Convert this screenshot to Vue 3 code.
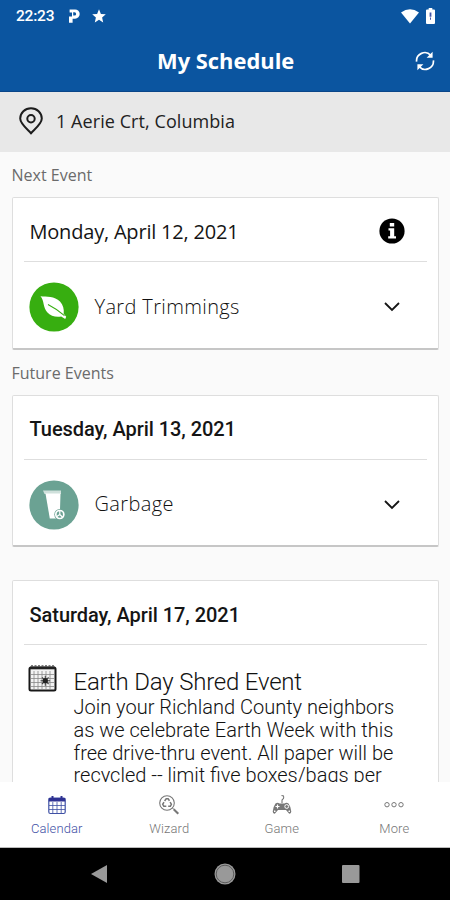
<template>
  <div class="phone">
    <header class="top">
      <div class="status">
        <span class="clock">22:23</span>
        <svg class="parking" width="13" height="16" viewBox="0 0 13 16">
          <path d="M1.600 1.500h5.500a4.600 4.600 0 0 1 0 9.200H4.600v4H1V8.600h3V4.500H1.600z" fill="#fff" />
          <path d="M5.200 4.300h1.300a1.600 1.600 0 0 1 0 3.300H5.200z" fill="#0b55a0" />
        </svg>
        <svg class="star" width="14" height="14" viewBox="0 0 14 14">
          <path d="M7 .3l1.900 4.600 4.900.4-3.700 3.200 1.100 4.900L7 10.800l-4.200 2.600 1.100-4.900L.2 5.300l4.900-.4z" fill="#fff" />
        </svg>
        <svg class="wifi" width="18" height="15" viewBox="0 0 18 15">
          <path d="M0 3.400Q9-3 18 3.400L9 14.600z" fill="#fff" />
        </svg>
        <svg class="battery" width="9" height="16" viewBox="0 0 9 16">
          <path d="M2.700 0h3.600v1.600H8q1 0 1 1V15q0 1-1 1H1q-1 0-1-1V2.600q0-1 1-1h1.700z" fill="#fff" />
          <path d="M3.600 4.600h1.800v4.200H3.600zM4 9.500h1v2.200H4z" fill="#4254a8" />
        </svg>
      </div>
      <div class="title-bar">
        <h1>My Schedule</h1>
        <svg class="refresh" width="20" height="20" viewBox="0 0 20 20">
          <g fill="none" stroke="#fff" stroke-width="1.700">
            <path d="M1.600 10.600A8.200 8.200 0 0 1 15.800 4.300" />
            <path d="M18.400 9.400A8.200 8.200 0 0 1 4.200 15.700" />
          </g>
          <path d="M17.600.800v6h-6zM2.400 19.200v-6h6z" fill="#fff" />
        </svg>
      </div>
    </header>

    <div class="address">
      <svg width="24" height="28" viewBox="0 0 24 28">
        <path d="M12 26.300C9 22.800 1.200 17 1.200 11.600a10.800 10.300 0 0 1 21.600 0C22.800 17 15 22.800 12 26.300z" fill="none" stroke="#1c1c1c" stroke-width="2" />
        <circle cx="12" cy="11.800" r="3.700" fill="none" stroke="#1c1c1c" stroke-width="2" />
      </svg>
      <span>1 Aerie Crt, Columbia</span>
    </div>

    <main class="content">
      <h2>Next Event</h2>
      <section class="card">
        <div class="date next">
          <span>Monday, April 12, 2021</span>
          <svg class="info" width="26" height="26" viewBox="0 0 26 26">
            <circle cx="13" cy="13" r="12.600" fill="#000" />
            <path d="M10.800 5h4.400v3.600h-4.400zM9.500 10.200h5.700v8H17v2.400H9.200v-2.400h1.900v-5.600H9.500z" fill="#fff" />
          </svg>
        </div>
        <div class="pickup">
          <svg width="50" height="50" viewBox="0 0 50 50">
            <circle cx="25" cy="25" r="24.600" fill="#37ae10" />
            <path d="M11.500 14.200c6 .800 14-.400 19.500 5.400 3.200 3.400 4.200 7.700 3.700 12.200l2.500 3-1 2.200-4-2.600c-5 1-10.600-.300-14-4.200-4.400-5-2.700-11.200-6.700-16z" fill="#fff" />
            <path d="M19 22.500Q27 26.500 35.500 33.700" fill="none" stroke="#37ae10" stroke-width="1.100" />
          </svg>
          <span>Yard Trimmings</span>
          <svg class="chevron" width="16" height="10" viewBox="0 0 16 10">
            <path d="M1 1l7 7 7-7" fill="none" stroke="#151515" stroke-width="1.800" />
          </svg>
        </div>
      </section>

      <h2>Future Events</h2>
      <section class="card">
        <div class="date"><span>Tuesday, April 13, 2021</span></div>
        <div class="pickup garbage">
          <svg width="50" height="50" viewBox="0 0 50 50">
            <circle cx="25" cy="25" r="24.600" fill="#6ba293" />
            <path d="M14 10.500h18v3.500H15.500z" fill="#cfe0db" />
            <path d="M16.500 13.500h15l-.800 25H20.800z" fill="#fff" />
            <circle cx="30.800" cy="34.500" r="5.500" fill="#6ba293" />
            <circle cx="30.800" cy="34.500" r="4" fill="none" stroke="#fff" stroke-width="1.700" />
            <path d="M30.800 30.500v4l3 3M30.800 34.500l-3 2" stroke="#fff" stroke-width="1.200" fill="none" />
          </svg>
          <span>Garbage</span>
          <svg class="chevron" width="16" height="10" viewBox="0 0 16 10">
            <path d="M1 1l7 7 7-7" fill="none" stroke="#151515" stroke-width="1.800" />
          </svg>
        </div>
      </section>

      <section class="card event-card">
        <div class="date saturday"><span>Saturday, April 17, 2021</span></div>
        <div class="event">
          <svg width="29" height="27" viewBox="0 0 29 27">
            <rect x="1.500" y="2.500" width="26" height="23" rx="1.500" fill="#f2f2f2" stroke="#181818" stroke-width="2" />
            <path d="M2 3h25" stroke="#222" stroke-width="2.600" />
            <path d="M3 1h23" stroke="#555" stroke-width="1.600" stroke-dasharray="2 1.500" />
            <path d="M6 6v18M10 6v18M14 6v18M18 6v18M22 6v18M3 9.500h23M3 13.500h23M3 17.500h23M3 21.500h23" stroke="#888" stroke-width=".8" />
            <path d="M17.300 10.700v10M12.500 15.700h9.600M14 12.400l6.600 6.600M20.600 12.400L14 19" stroke="#444" stroke-width="1.100" />
            <circle cx="17.300" cy="15.700" r="2.600" fill="#222" />
          </svg>
          <div class="details">
            <h3>Earth Day Shred Event</h3>
            <p>
              Join your Richland County neighbors<br />
              as we celebrate Earth Week with this<br />
              free drive-thru event. All paper will be<br />
              recycled -- limit five boxes/bags per<br />
            </p>
          </div>
        </div>
      </section>
    </main>

    <nav class="tabs">
      <a v-for="tab in tabs" :key="tab" :class="['tab', { active: tab === current }]" @click="current = tab">
        <svg v-if="tab === 'Calendar'" width="20" height="20" viewBox="0 0 20 20">
          <rect x="1.800" y="3.200" width="16.400" height="15.300" rx="1.500" fill="none" stroke="currentColor" stroke-width="1.200" />
          <path d="M1.800 3h16.400v3.500H1.800z" fill="#2e3192" />
          <path d="M5.500 1v4M14.500 1v4" stroke="#2e3192" stroke-width="2" />
          <path d="M5.800 7v11M10 7v11M14.200 7v11M2 10.500h16M2 14.500h16" stroke="currentColor" stroke-width=".8" />
        </svg>
        <svg v-else-if="tab === 'Wizard'" width="20" height="20" viewBox="0 0 20 20" fill="none" stroke="currentColor">
          <circle cx="8" cy="8" r="7.300" stroke-width="1.100" />
          <path d="M5.600 6L7.200 3.800h1.900l1.400 2M11.100 7l1.300 2.300-1 1.900H9.200M7.300 11.200H4.800l-1.100-1.900L5 7.100" stroke-width="1.500" />
          <path d="M13.500 13l1.400 1.400" stroke-width="1" />
          <path d="M14.700 14.200l4.600 4.500" stroke-width="2.100" />
        </svg>
        <svg v-else-if="tab === 'Game'" width="20" height="20" viewBox="0 0 20 20">
          <path d="M10 8V5.500Q10 4.500 11 4T11.500 1L9.500.500" fill="none" stroke="currentColor" stroke-width="1.100" />
          <path d="M3.500 8.500Q5.500 7 7.500 8.500h5q2-1.500 4 0Q18.500 11 19.300 16.500 19 19.200 17 18.500L14 15H6L3 18.500Q1 19.200.7 16.500 1.500 11 3.500 8.500z" fill="currentColor" />
          <path d="M3.500 11.500h4M5.500 9.500v4" stroke="#fff" stroke-width="1.200" />
          <circle cx="14.700" cy="11.500" r="1.900" fill="none" stroke="#fff" stroke-width="1" />
          <path d="M2.600 15.500l.2 1.500M17.400 15.500l-.2 1.500" stroke="#fff" stroke-width="1.500" />
        </svg>
        <svg v-else width="20" height="20" viewBox="0 0 20 20" fill="none" stroke="currentColor">
          <circle cx="3" cy="9.700" r="2.200" />
          <circle cx="10" cy="9.700" r="2.200" />
          <circle cx="17" cy="9.700" r="2.200" />
        </svg>
        <span>{{ tab }}</span>
      </a>
    </nav>

    <!-- Android navigation buttons -->
    <div class="system-nav">
      <svg width="16" height="18" viewBox="0 0 16 18"><path d="M16 0v18L0 9z" fill="#999" /></svg>
      <svg width="22" height="22" viewBox="0 0 22 22">
        <circle cx="11" cy="11" r="10.500" fill="#999" />
        <circle cx="11" cy="11" r="8.800" fill="none" stroke="#555" stroke-width=".9" />
      </svg>
      <svg width="18" height="18" viewBox="0 0 18 18"><rect width="17.500" height="18" rx="1" fill="#999" /></svg>
    </div>
  </div>
</template>

<script setup>
import { ref } from 'vue'

const tabs = ['Calendar', 'Wizard', 'Game', 'More']
const current = ref('Calendar')
</script>

<style>
body {
  margin: 0;
  overflow: hidden;
}
</style>

<style scoped>
.phone {
  width: 450px;
  height: 900px;
  display: flex;
  flex-direction: column;
  overflow: hidden;
  background: #fafafa;
  font-family: "Open Sans", "Noto Sans", sans-serif;
}
svg {
  display: block;
  flex: none;
}
span {
  white-space: nowrap;
}
.top {
  height: 92px;
  flex: none;
  box-sizing: border-box;
  background: #0b55a0;
  border-bottom: 1px solid #0a4689;
  color: #fff;
}
.status {
  height: 32px;
  display: flex;
  align-items: center;
  padding: 0 15px 0 16px;
}
.clock {
  width: 52px;
  font: 500 15.5px "Roboto", sans-serif;
  letter-spacing: -0.2px;
}
.star {
  margin-left: 11px;
}
.wifi {
  margin-left: auto;
}
.battery {
  margin-left: 7px;
}
.title-bar {
  height: 58px;
  display: flex;
  align-items: center;
  padding: 0 15px 0 157px;
  justify-content: space-between;
}
h1 {
  margin: 0;
  font-size: 21.9px;
  line-height: 30px;
  font-weight: 700;
  white-space: nowrap;
}
.address {
  height: 60px;
  flex: none;
  box-sizing: border-box;
  display: flex;
  align-items: center;
  gap: 13px;
  padding: 0 19px 2px;
  background: #e8e8e8;
  color: #222;
  font-size: 18px;
  letter-spacing: 0.07px;
}
.content {
  flex: 1;
  min-height: 0;
  overflow: hidden;
  padding: 0 11px 0 11.5px;
}
h2 {
  height: 45px;
  margin: 0;
  font-size: 16px;
  font-weight: 400;
  line-height: 47px;
  color: #6b6b6b;
}
.card {
  height: 152.5px;
  box-sizing: border-box;
  padding: 0 11px;
  background: #fff;
  border: 1px solid #dedede;
  border-bottom: 2px solid #c6c6c6;
  border-radius: 2px;
}
.date {
  height: 64px;
  box-sizing: border-box;
  display: flex;
  align-items: center;
  justify-content: space-between;
  padding: 4px 22px 0 6px;
  border-bottom: 1px solid #dedede;
  font: 500 20px "Roboto", sans-serif;
  letter-spacing: -0.05px;
  color: #151515;
}
.date.next {
  padding-top: 3px;
  font: 400 20px "Open Sans", sans-serif;
  letter-spacing: -0.2px;
}
.pickup {
  height: 86px;
  display: flex;
  align-items: center;
  padding: 2px 27px 0 5px;
  font-size: 20px;
  font-weight: 300;
  letter-spacing: 0.36px;
  color: #111;
}
.pickup span {
  margin-left: 16px;
  padding-bottom: 2px;
}
.chevron {
  margin-left: auto;
}
.event-card {
  height: 280px;
  margin-top: 33px;
}
.event {
  display: flex;
  padding: 20px 0 0 4px;
}
.details {
  margin-left: 17px;
  font-family: "Roboto", sans-serif;
  font-weight: 300;
  color: #111;
}
h3 {
  margin: 3px 0 0;
  font-size: 24px;
  font-weight: 300;
  line-height: 28px;
  letter-spacing: -0.2px;
  white-space: nowrap;
}
p {
  margin: 0;
  font-size: 20px;
  line-height: 22.8px;
  white-space: nowrap;
}
.tabs {
  height: 66px;
  flex: none;
  box-sizing: border-box;
  display: flex;
  background: #fff;
  border-bottom: 1px solid #bbb;
}
.tab {
  width: 112.5px;
  display: flex;
  flex-direction: column;
  align-items: center;
  padding-top: 13px;
  color: #777;
  font: 300 13px "Roboto", sans-serif;
  letter-spacing: 0.1px;
}
.tab svg,
.tab span {
  margin-left: 1px;
}
.tab span {
  margin-top: 6px;
}
.tab.active {
  color: #3f51a5;
}
.system-nav {
  height: 52px;
  flex: none;
  display: flex;
  align-items: center;
  justify-content: space-between;
  padding: 0 90px 0 91px;
  background: #000;
}
</style>
